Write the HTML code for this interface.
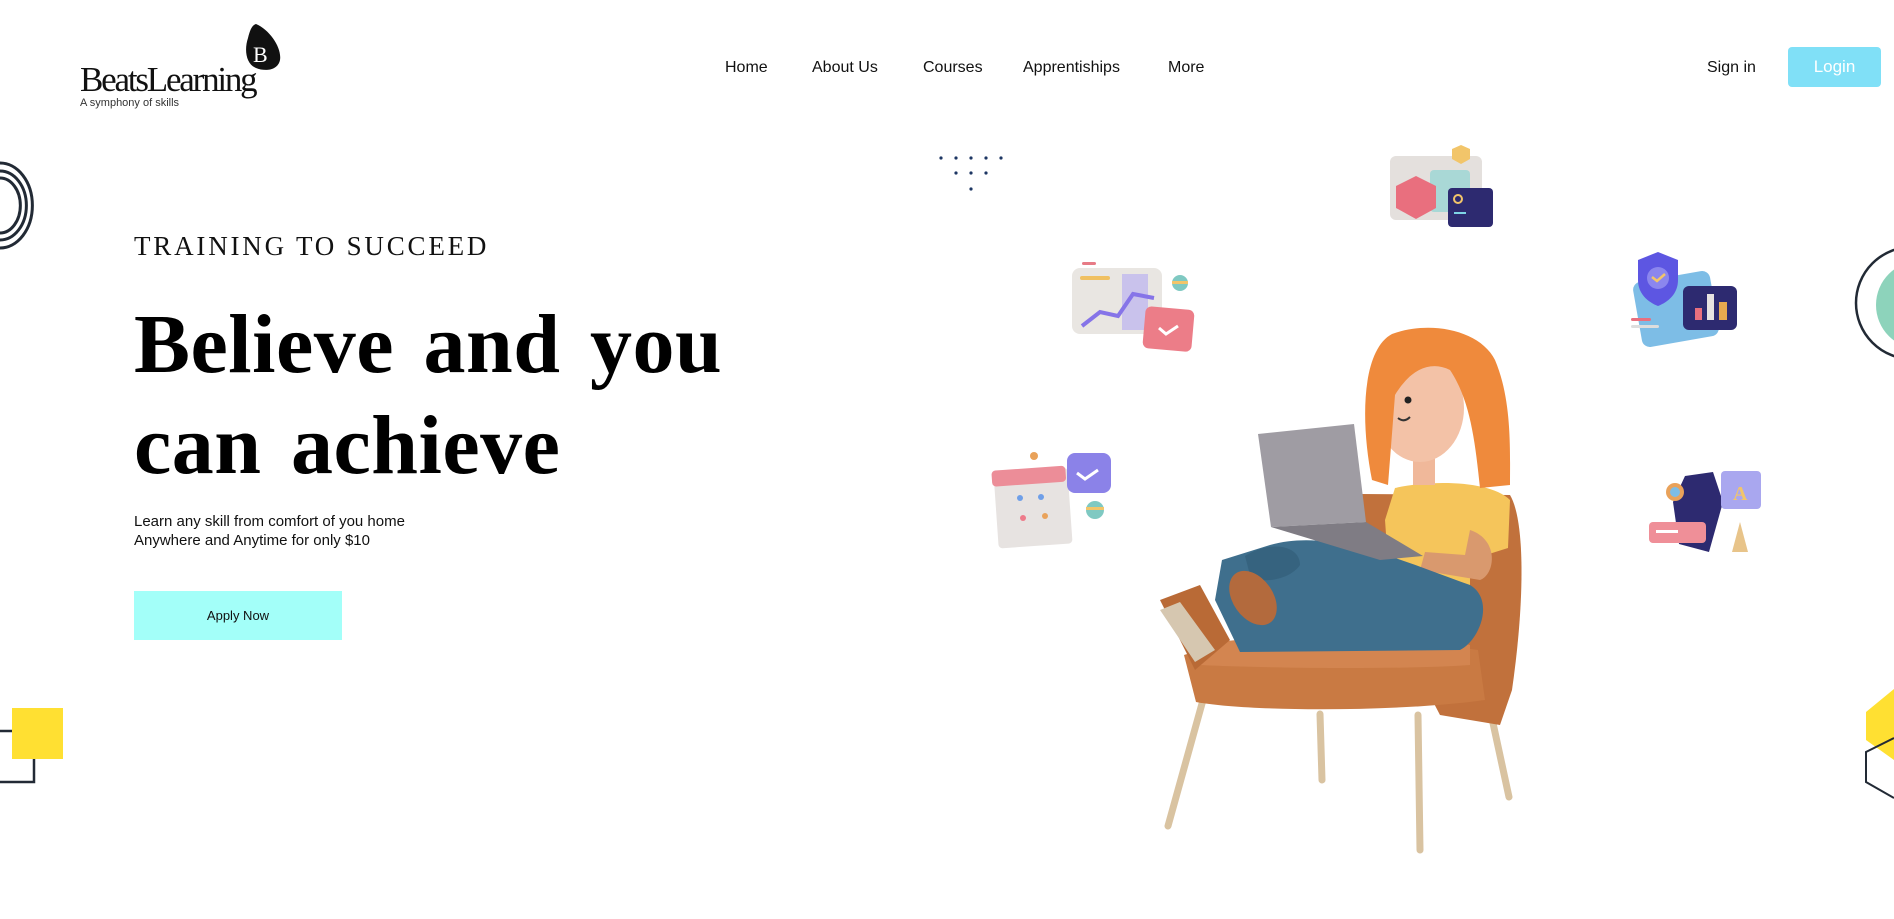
<!DOCTYPE html>
<html><head><meta charset="utf-8"><style>
html,body{margin:0;padding:0;width:1894px;height:919px;overflow:hidden;background:#fff;position:relative;font-family:"Liberation Sans",sans-serif;}
.a{position:absolute;white-space:nowrap}
.nav{font-size:16px;color:#111;top:59px}
</style></head><body>
<svg class="a" style="left:0;top:0" width="1894" height="919" viewBox="0 0 1894 919">
<path d="M256 24 C270 30 282 48 280 60 C278 70 266 72 256 68 C246 64 244 50 248 38 C250 30 252 25 256 24Z" fill="#111"/>
<text x="253" y="62" font-family="Liberation Serif" font-size="22" fill="#fff">B</text>
<g fill="none" stroke="#222a35" stroke-width="3">
<path d="M0 163 A32 42 0 0 1 0 248"/>
<path d="M0 178 A20 27 0 0 1 0 233"/>
<path d="M0 171 A26 34 0 0 1 0 240"/>
</g>
<path d="M0 731 H14 M34 759 V782 H0" stroke="#222a35" stroke-width="2.5" fill="none"/>
<rect x="12" y="708" width="51" height="51" fill="#ffe032"/>
<circle cx="1912" cy="303" r="56" fill="none" stroke="#222a35" stroke-width="2.5"/>
<circle cx="1920" cy="305" r="44" fill="#8dd3bb"/>
<path d="M1894 689 L1866 712 L1866 740 L1894 760Z" fill="#ffe032"/>
<path d="M1894 738 L1866 752 L1866 782 L1894 798" fill="none" stroke="#222a35" stroke-width="2"/>
<g fill="#1d3663">
<circle cx="941" cy="158" r="1.6"/><circle cx="956" cy="158" r="1.6"/><circle cx="971" cy="158" r="1.6"/><circle cx="986" cy="158" r="1.6"/><circle cx="1001" cy="158" r="1.6"/>
<circle cx="956" cy="173" r="1.6"/><circle cx="971" cy="173" r="1.6"/><circle cx="986" cy="173" r="1.6"/>
<circle cx="971" cy="189" r="1.6"/>
</g>
<rect x="1390" y="156" width="92" height="64" rx="6" fill="#e4e0dd"/>
<rect x="1430" y="170" width="40" height="42" rx="4" fill="#a9d8d6"/>
<path d="M1461 145 l9 4 v10 l-9 5 l-9 -5 v-10z" fill="#f2c56a"/>
<path d="M1396 186 l20 -10 l20 10 v22 l-20 11 l-20 -11z" fill="#e96f7e"/>
<rect x="1448" y="188" width="45" height="39" rx="4" fill="#2d2a70"/>
<circle cx="1458" cy="199" r="4" fill="none" stroke="#f2c56a" stroke-width="2"/>
<rect x="1454" y="212" width="12" height="2" fill="#7fd4e6"/>
<rect x="1072" y="268" width="90" height="66" rx="8" fill="#e9e6e2"/>
<rect x="1122" y="274" width="26" height="56" fill="#c9c2ec"/>
<rect x="1080" y="276" width="30" height="4" rx="2" fill="#f0c061"/>
<rect x="1082" y="262" width="14" height="3" rx="1.5" fill="#e77b86"/>
<path d="M1082 326 L1100 312 L1118 316 L1133 294 L1154 298" fill="none" stroke="#8674e8" stroke-width="4"/>
<circle cx="1180" cy="283" r="8" fill="#7fc9c2"/><rect x="1172" y="281" width="16" height="3" fill="#f2c56a"/>
<rect x="1144" y="308" width="49" height="42" rx="6" fill="#ec7d88" transform="rotate(5 1168 329)"/>
<path d="M1159 328 l7 6 l12 -8" stroke="#fff" stroke-width="3" fill="none"/>
<rect x="996" y="470" width="74" height="76" rx="4" fill="#e7e3e1" transform="rotate(-4 1033 508)"/>
<rect x="994" y="468" width="74" height="16" rx="4" fill="#ec8d98" transform="rotate(-4 1033 508)"/>
<circle cx="1034" cy="456" r="4" fill="#e9a25a"/>
<g fill="#6f9fe8"><circle cx="1020" cy="498" r="3"/><circle cx="1041" cy="497" r="3"/></g>
<circle cx="1023" cy="518" r="3" fill="#ee7b8a"/><circle cx="1045" cy="516" r="3" fill="#e9a25a"/>
<rect x="1067" y="453" width="44" height="40" rx="8" fill="#8b82e8"/>
<path d="M1077 473 l8 6 l13 -9" stroke="#fff" stroke-width="3" fill="none"/>
<circle cx="1095" cy="510" r="9" fill="#7fc9c2"/><rect x="1086" y="507" width="18" height="3" fill="#f2c56a"/>
<rect x="1637" y="276" width="78" height="66" rx="8" fill="#7dbde6" transform="rotate(-10 1676 309)"/>
<path d="M1658 252 l20 8 v20 c0 14 -10 22 -20 26 c-10 -4 -20 -12 -20 -26 v-20z" fill="#5d56e2"/>
<circle cx="1658" cy="278" r="11" fill="#8b86ee"/>
<path d="M1652 277 l5 4 l8 -7" stroke="#f2c56a" stroke-width="2.5" fill="none"/>
<rect x="1683" y="286" width="54" height="44" rx="6" fill="#2d2a70"/>
<rect x="1695" y="308" width="7" height="12" fill="#e96f7e"/><rect x="1707" y="294" width="7" height="26" fill="#e7e3e1"/><rect x="1719" y="302" width="8" height="18" fill="#e8a94f"/>
<rect x="1631" y="318" width="20" height="3" rx="1.5" fill="#e96f7e"/><rect x="1631" y="325" width="28" height="3" rx="1.5" fill="#ddd"/>
<path d="M1685 476 l28 -4 l10 30 l-14 50 l-30 -8 l-6 -42z" fill="#2d2a70"/>
<rect x="1721" y="471" width="40" height="38" rx="4" fill="#a9a7ef"/>
<text x="1733" y="500" font-family="Liberation Serif" font-size="20" font-weight="bold" fill="#f2c56a">A</text>
<circle cx="1675" cy="492" r="9" fill="#e9a25a"/><circle cx="1675" cy="492" r="5" fill="#7dbde6"/>
<rect x="1649" y="522" width="57" height="21" rx="4" fill="#ef8f98"/>
<rect x="1656" y="530" width="22" height="3" fill="#fff"/>
<path d="M1740 522 l8 30 h-16z" fill="#e8c48a"/>
<g stroke="#d9c3a1" stroke-width="7" stroke-linecap="round">
<line x1="1203" y1="700" x2="1168" y2="826"/>
<line x1="1320" y1="714" x2="1322" y2="780"/>
<line x1="1418" y1="715" x2="1420" y2="850"/>
<line x1="1488" y1="700" x2="1509" y2="797"/>
</g>
<path d="M1360 494 L1510 495 C1525 520 1525 600 1512 690 L1500 725 L1440 715 L1380 600Z" fill="#c1713c"/>
<path d="M1184 655 C1230 640 1420 640 1478 650 L1485 700 C1400 712 1250 712 1196 702Z" fill="#c97a43"/>
<path d="M1196 645 C1260 633 1420 635 1470 645 L1470 665 C1400 670 1260 668 1200 665Z" fill="#d38550"/>
<path d="M1160 600 L1200 585 L1230 640 L1195 670Z" fill="#b96a36"/>
<path d="M1395 488 C1430 480 1490 480 1510 500 L1508 548 L1470 560 L1470 590 L1390 590 L1385 520Z" fill="#f5c55b"/>
<path d="M1470 530 C1500 540 1495 575 1480 580 L1420 570 L1425 552 L1465 555Z" fill="#d9996e"/>
<path d="M1270 545 C1330 528 1400 560 1470 585 C1495 600 1480 640 1460 650 L1240 652 L1215 600 L1222 560Z" fill="#3f6f8d"/>
<path d="M1245 556 C1270 540 1300 545 1300 565 C1290 580 1260 585 1250 575Z" fill="#36637f"/>
<ellipse cx="1253" cy="598" rx="20" ry="30" fill="#b36a3d" transform="rotate(-35 1253 598)"/>
<path d="M1160 610 L1180 602 L1215 650 L1195 662Z" fill="#d6c7b0"/>
<path d="M1258 434 L1354 424 L1366 522 L1271 527Z" fill="#9f9ca3"/>
<path d="M1271 527 L1366 522 L1423 556 L1380 560Z" fill="#7f7c84"/>
<rect x="1413" y="440" width="22" height="45" fill="#f0b89a"/>
<ellipse cx="1420" cy="408" rx="44" ry="54" fill="#f3c2a7"/>
<circle cx="1408" cy="400" r="3.5" fill="#222"/><circle cx="1383" cy="405" r="3" fill="#222"/>
<path d="M1398 418 q6 5 12 -1" stroke="#333" stroke-width="2" fill="none"/>
<path d="M1372 480 C1360 420 1362 350 1392 334 C1430 320 1480 330 1495 360 C1512 400 1510 450 1510 485 L1480 488 C1475 440 1470 400 1450 370 C1430 360 1410 370 1395 395 L1388 485Z" fill="#ef8a3c"/>
</svg>

<div class="a" style="left:80px;top:60px;font-family:'Liberation Serif',serif;font-size:35px;letter-spacing:-2.2px;color:#111">BeatsLearning</div>
<div class="a" style="left:80px;top:97px;font-size:11px;color:#333">A symphony of skills</div>

<div class="a nav" style="left:725px">Home</div>
<div class="a nav" style="left:812px">About Us</div>
<div class="a nav" style="left:923px">Courses</div>
<div class="a nav" style="left:1023px">Apprentiships</div>
<div class="a nav" style="left:1168px">More</div>
<div class="a nav" style="left:1707px">Sign in</div>
<div class="a" style="left:1788px;top:47px;width:93px;height:40px;background:#80e0f7;border-radius:4px;color:#fff;font-size:17px;line-height:40px;text-align:center">Login</div>

<div class="a" style="left:134px;top:231px;font-family:'Liberation Serif',serif;font-size:27px;letter-spacing:2.8px;color:#111">TRAINING TO SUCCEED</div>
<div class="a" style="left:134px;top:294px;font-family:'Liberation Serif',serif;font-weight:bold;font-size:84px;line-height:101px;word-spacing:8px;letter-spacing:0.5px;color:#000">Believe and you<br>can achieve</div>
<div class="a" style="left:134px;top:512px;font-size:15px;line-height:19px;color:#111">Learn any skill from comfort of you home<br>Anywhere and Anytime for only $10</div>
<div class="a" style="left:134px;top:591px;width:208px;height:49px;background:#a3fff9;font-size:13px;line-height:49px;text-align:center;color:#111">Apply Now</div>
</body></html>
